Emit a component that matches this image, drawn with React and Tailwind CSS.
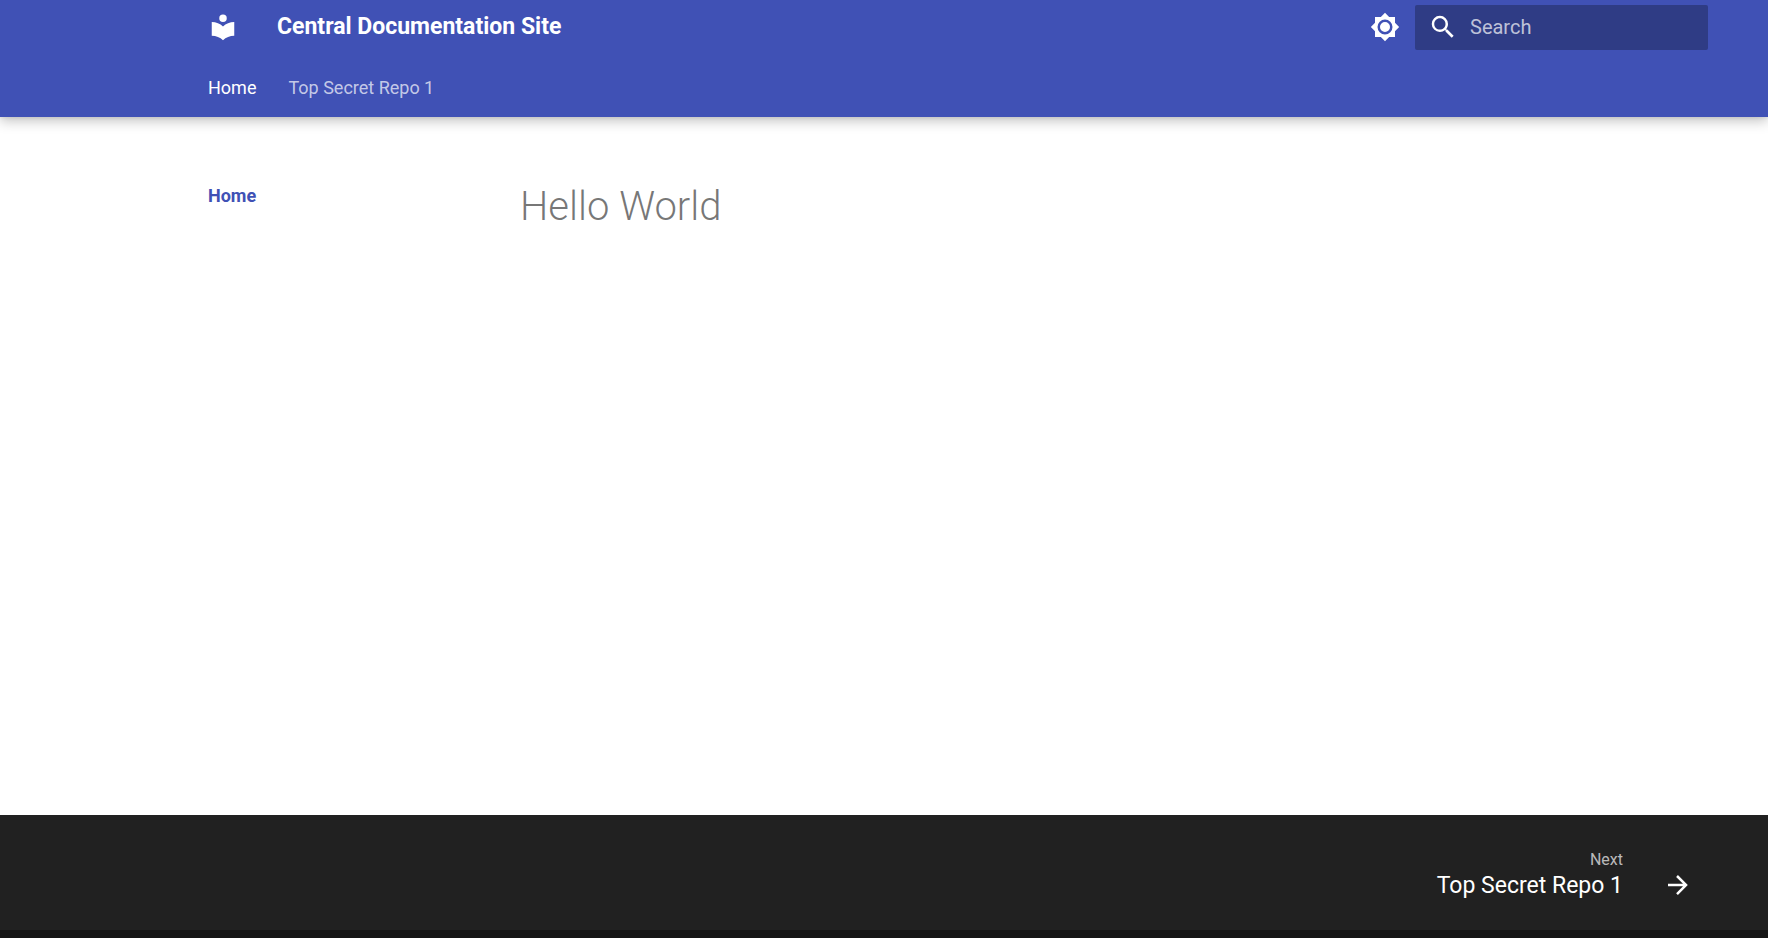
const Icon = ({ d }) => (
  <svg viewBox="0 0 24 24" className="size-[30px] shrink-0" fill="currentColor" aria-hidden="true">
    <path d={d} />
  </svg>
);

const book =
  "M12 8a3 3 0 0 0 3-3 3 3 0 0 0-3-3 3 3 0 0 0-3 3 3 3 0 0 0 3 3m0 3.54C9.64 9.35 6.5 8 3 8v11c3.5 0 6.64 1.35 9 3.54 2.36-2.19 5.5-3.54 9-3.54V8c-3.5 0-6.64 1.35-9 3.54Z";
const sun =
  "M12 8a4 4 0 0 0-4 4 4 4 0 0 0 4 4 4 4 0 0 0 4-4 4 4 0 0 0-4-4m0 10a6 6 0 0 1-6-6 6 6 0 0 1 6-6 6 6 0 0 1 6 6 6 6 0 0 1-6 6m8-9.31V4h-4.69L12 .69 8.69 4H4v4.69L.69 12 4 15.31V20h4.69L12 23.31 15.31 20H20v-4.69L23.31 12 20 8.69Z";
const magnifier =
  "M9.5 3A6.5 6.5 0 0 1 16 9.5c0 1.61-.59 3.09-1.56 4.23l.27.27h.79l5 5-1.5 1.5-5-5v-.79l-.27-.27A6.516 6.516 0 0 1 9.5 16 6.5 6.5 0 0 1 3 9.5 6.5 6.5 0 0 1 9.5 3m0 2C7 5 5 7 5 9.5S7 14 9.5 14 14 12 14 9.5 12 5 9.5 5Z";
const arrow = "M4 11v2h12l-5.5 5.5 1.42 1.42L19.84 12l-7.92-7.92L10.5 5.5 16 11H4Z";

export default function App() {
  return (
    <div className="flex min-h-screen flex-col bg-white font-['Roboto','Liberation_Sans',sans-serif]">
      <header className="bg-[#4051b5] text-white shadow-[0_0_4px_rgba(0,0,0,0.1),0_4px_12px_rgba(0,0,0,0.24)]">
        <div className="mx-auto max-w-[1648px] pl-[148px]">
          <div className="flex h-[54px] items-center">
            <a href="#" aria-label="Central Documentation Site home">
              <Icon d={book} />
            </a>
            <span className="ml-[39px] flex-1 text-[23px] leading-8 font-bold">Central Documentation Site</span>
            <button type="button" aria-label="Switch to dark mode" className="mr-[15px]">
              <Icon d={sun} />
            </button>
            <label className="flex h-[45px] w-[293px] items-center gap-3 rounded-xs bg-[#2f3c85] px-[13px]">
              <Icon d={magnifier} />
              <input
                type="search"
                aria-label="Search"
                placeholder="Search"
                className="w-full min-w-0 bg-transparent text-xl outline-none placeholder:text-white/70"
              />
            </label>
          </div>
          <nav aria-label="Tabs" className="flex h-[63px] items-center gap-8 pt-1 text-lg">
            <a href="#">Home</a>
            <a href="#" className="text-white/70">Top Secret Repo 1</a>
          </nav>
        </div>
      </header>
      <main className="mx-auto flex w-full max-w-[1648px] flex-1 pt-16 pl-[148px]">
        <nav aria-label="Navigation" className="w-[312px] shrink-0 text-lg leading-[30px] font-bold text-[#4051b5]">
          <a href="#">Home</a>
        </nav>
        <h1 className="text-[40px] leading-[52px] font-light text-black/54">Hello World</h1>
      </main>
      <footer className="bg-[#212121] text-white">
        <div className="mx-auto flex h-[115px] max-w-[1648px] justify-end pr-[15px]">
          <a href="#" className="flex items-end gap-10 pb-[30px]">
            <span className="flex flex-col text-right">
              <span className="text-base leading-6 text-white/70">Next</span>
              <span className="text-[23px] leading-7">Top Secret Repo 1</span>
            </span>
            <Icon d={arrow} />
          </a>
        </div>
        <div className="h-2 bg-[#151515]" />
      </footer>
    </div>
  );
}
